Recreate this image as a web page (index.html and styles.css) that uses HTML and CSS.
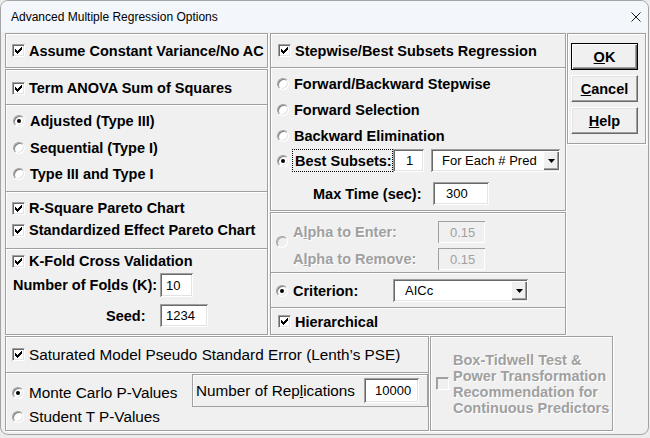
FILE: index.html
```html
<!DOCTYPE html>
<html lang="en">
<head>
    <meta charset="UTF-8">
    <meta name="viewport" content="width=device-width, initial-scale=1.0">
    <title>Advanced Multiple Regression Options</title>
    <link rel="stylesheet" href="styles.css">
</head>
<body>

<div class="window">
    <div class="titlebar">
        <span class="title">Advanced Multiple Regression Options</span>
        <svg class="close" width="10" height="10" viewBox="0 0 10 10"><path d="M0.5 0.5L9.5 9.5M9.5 0.5L0.5 9.5" stroke="#1a1a1a" stroke-width="1"/></svg>
    </div>

    <div class="client">
        <div class="top">
            <!-- Left column -->
            <div class="col-left">
                <div class="frame frame-assume">
                    <label class="opt"><span class="chk"><svg width="7" height="7" viewBox="0 0 7 7"><path d="M0 2h1v3H0zM1 3h1v3H1zM2 4h1v3H2zM3 3h1v3H3zM4 2h1v3H4zM5 1h1v3H5zM6 0h1v3H6z"/></svg></span>Assume Constant Variance/No AC</label>
                </div>

                <div class="frame frame-anova">
                    <div class="sec-anova-head">
                        <label class="opt"><span class="chk"><svg width="7" height="7" viewBox="0 0 7 7"><path d="M0 2h1v3H0zM1 3h1v3H1zM2 4h1v3H2zM3 3h1v3H3zM4 2h1v3H4zM5 1h1v3H5zM6 0h1v3H6z"/></svg></span>Term ANOVA Sum of Squares</label>
                    </div>
                    <div class="sep"></div>
                    <div class="sec-types">
                        <label class="opt"><span class="rad on"></span>Adjusted (Type III)</label>
                        <label class="opt"><span class="rad"></span>Sequential (Type I)</label>
                        <label class="opt"><span class="rad"></span>Type III and Type I</label>
                    </div>
                    <div class="sep"></div>
                    <div class="sec-pareto">
                        <label class="opt"><span class="chk"><svg width="7" height="7" viewBox="0 0 7 7"><path d="M0 2h1v3H0zM1 3h1v3H1zM2 4h1v3H2zM3 3h1v3H3zM4 2h1v3H4zM5 1h1v3H5zM6 0h1v3H6z"/></svg></span>R-Square Pareto Chart</label>
                        <label class="opt"><span class="chk"><svg width="7" height="7" viewBox="0 0 7 7"><path d="M0 2h1v3H0zM1 3h1v3H1zM2 4h1v3H2zM3 3h1v3H3zM4 2h1v3H4zM5 1h1v3H5zM6 0h1v3H6z"/></svg></span>Standardized Effect Pareto Chart</label>
                    </div>
                    <div class="sep"></div>
                    <div class="sec-kfold">
                        <label class="opt kf-row1"><span class="chk"><svg width="7" height="7" viewBox="0 0 7 7"><path d="M0 2h1v3H0zM1 3h1v3H1zM2 4h1v3H2zM3 3h1v3H3zM4 2h1v3H4zM5 1h1v3H5zM6 0h1v3H6z"/></svg></span>K-Fold Cross Validation</label>
                        <div class="kf-row2">
                            <span class="lbl-folds">Number of Fo<u>l</u>ds (K):</span>
                            <input type="text" class="edit w-folds" value="10">
                        </div>
                        <div class="kf-row3">
                            <span class="lbl-seed">Seed:</span>
                            <input type="text" class="edit w-seed" value="1234">
                        </div>
                    </div>
                </div>
            </div>

            <!-- Middle column -->
            <div class="col-mid">
                <div class="frame frame-step">
                    <div class="sec-step-head">
                        <label class="opt"><span class="chk"><svg width="7" height="7" viewBox="0 0 7 7"><path d="M0 2h1v3H0zM1 3h1v3H1zM2 4h1v3H2zM3 3h1v3H3zM4 2h1v3H4zM5 1h1v3H5zM6 0h1v3H6z"/></svg></span>Stepwise/Best Subsets Regression</label>
                    </div>
                    <div class="sep"></div>
                    <div class="sec-methods">
                        <label class="opt"><span class="rad"></span>Forward/Backward Stepwise</label>
                        <label class="opt"><span class="rad"></span>Forward Selection</label>
                        <label class="opt"><span class="rad"></span>Backward Elimination</label>
                        <div class="row-best">
                            <span class="rad on"></span>
                            <span class="focus">Best Subsets:</span>
                            <input type="text" class="edit w-best" value="1">
                            <div class="combo w-each">
                                <span>For Each # Pred</span>
                                <span class="combo-arrow"><svg width="7" height="4" viewBox="0 0 7 4"><path d="M0 0h7L3.5 4z"/></svg></span>
                            </div>
                        </div>
                        <div class="row-max">
                            <span class="lbl-max">Max Time (sec):</span>
                            <input type="text" class="edit w-max" value="300">
                        </div>
                    </div>
                </div>

                <div class="frame frame-alpha">
                    <div class="sec-alpha">
                        <span class="rad off alpha-rad"></span>
                        <div class="alpha-grid">
                            <span class="dis">A<u>l</u>pha to Enter:</span>
                            <input type="text" class="edit edit-off" value="0.15">
                            <span class="dis">A<u>l</u>pha to Remove:</span>
                            <input type="text" class="edit edit-off" value="0.15">
                        </div>
                    </div>
                    <div class="sep"></div>
                    <div class="sec-crit">
                        <span class="rad on"></span>
                        <span class="lbl-crit">Criterion:</span>
                        <div class="combo w-crit">
                            <span>AICc</span>
                            <span class="combo-arrow"><svg width="7" height="4" viewBox="0 0 7 4"><path d="M0 0h7L3.5 4z"/></svg></span>
                        </div>
                    </div>
                    <div class="sep"></div>
                    <div class="sec-hier">
                        <label class="opt"><span class="chk"><svg width="7" height="7" viewBox="0 0 7 7"><path d="M0 2h1v3H0zM1 3h1v3H1zM2 4h1v3H2zM3 3h1v3H3zM4 2h1v3H4zM5 1h1v3H5zM6 0h1v3H6z"/></svg></span>Hierarchical</label>
                    </div>
                </div>
            </div>

            <!-- Buttons -->
            <div class="frame frame-buttons">
                <button class="btn btn-default"><u>O</u>K</button>
                <button class="btn"><u>C</u>ancel</button>
                <button class="btn"><u>H</u>elp</button>
            </div>
        </div>

        <div class="bottom">
            <div class="frame frame-pse">
                <div class="sec-pse-head">
                    <label class="opt"><span class="chk"><svg width="7" height="7" viewBox="0 0 7 7"><path d="M0 2h1v3H0zM1 3h1v3H1zM2 4h1v3H2zM3 3h1v3H3zM4 2h1v3H4zM5 1h1v3H5zM6 0h1v3H6z"/></svg></span>Saturated Model Pseudo Standard Error (Lenth’s PSE)</label>
                </div>
                <div class="sep"></div>
                <div class="sec-pvalues">
                    <div class="pv-radios">
                        <label class="opt"><span class="rad on"></span>Monte Carlo P-Values</label>
                        <label class="opt"><span class="rad"></span>Student T P-Values</label>
                    </div>
                    <div class="frame rep-box">
                        <span class="lbl-rep">Number of Rep<u>l</u>ications</span>
                        <input type="text" class="edit w-rep" value="10000">
                    </div>
                </div>
            </div>

            <div class="frame frame-box">
                <span class="chk chk-off"></span>
                <span class="dis box-text">Box-Tidwell Test &amp;<br>Power Transformation<br>Recommendation for<br>Continuous Predictors</span>
            </div>
        </div>
    </div>
</div>

</body>
</html>
```

FILE: styles.css
```css
body {
    margin: 0;
    background-color: #ececec;
    font-family: 'Liberation Sans', Arial, sans-serif;
}

.window {
    width: 649px;
    height: 435px;
    box-sizing: border-box;
    border: 1px solid #a4a4a4;
    border-radius: 8px;
    background-color: #f0f0f0;
    overflow: hidden;
}

.titlebar {
    height: 31px;
    background-color: #f3f6fb;
    display: flex;
    align-items: center;
    justify-content: space-between;
    padding: 0 7px 0 10px;
}

.title {
    font-size: 12px;
    color: #000;
}

.close {
    display: block;
}

.client {
    padding: 1px 0 0 4px;
    font-size: 14.5px;
    font-weight: bold;
    color: #000;
}

/* etched group frame */
.frame {
    box-sizing: border-box;
    border: 1px solid #a0a0a0;
    box-shadow: inset 1px 1px 0 #fff, 1px 1px 0 #fff;
}

.sep {
    flex: none;
    border-top: 1px solid #a0a0a0;
    border-bottom: 1px solid #fff;
}

.opt {
    display: flex;
    align-items: center;
    white-space: nowrap;
}

/* check box */
.chk {
    flex: none;
    width: 13px;
    height: 13px;
    box-sizing: border-box;
    border: 1px solid;
    border-color: #a0a0a0 #fff #fff #a0a0a0;
    box-shadow: inset 1px 1px 0 #696969, inset -1px -1px 0 #e3e3e3;
    background-color: #fff;
    margin-right: 4px;
    display: flex;
    align-items: center;
    justify-content: center;
}

.chk svg {
    display: block;
}

.chk-off {
    background-color: #f0f0f0;
    box-shadow: inset 1px 1px 0 #a0a0a0;
}

/* radio button */
.rad {
    flex: none;
    width: 12px;
    height: 12px;
    box-sizing: border-box;
    border-radius: 50%;
    border: 1px solid;
    border-color: #a0a0a0 #fff #fff #a0a0a0;
    box-shadow: inset 1px 1px 0 #808080, inset -1px -1px 0 #e3e3e3;
    background-color: #fff;
    margin-right: 5px;
    display: flex;
    align-items: center;
    justify-content: center;
}

.rad.on::after {
    content: '';
    width: 4px;
    height: 4px;
    border-radius: 50%;
    background-color: #000;
}

.rad.off {
    background-color: #f0f0f0;
    box-shadow: inset 1px 1px 0 #b4b4b4;
}

/* edit box */
.edit {
    box-sizing: border-box;
    height: 23px;
    margin: 0;
    padding: 0 0 0 6px;
    border: none;
    outline: none;
    background-color: #fff;
    box-shadow: inset 1px 1px 0 #a0a0a0, inset -1px -1px 0 #fff, inset 2px 2px 0 #696969, inset -2px -2px 0 #e3e3e3;
    font: 13px 'Liberation Sans', Arial, sans-serif;
    color: #000;
}

.edit-off {
    background-color: #f0f0f0;
    color: #a0a0a0;
    padding-left: 12px;
    box-shadow: inset 1px 1px 0 #a0a0a0, inset -1px -1px 0 #fff;
}

.w-folds { width: 33px; height: 24px; }
.w-seed { width: 48px; }
.w-best { width: 31px; padding-left: 13px; }
.w-max { width: 56px; padding-left: 13px; }
.w-rep { width: 55px; height: 25px; padding-left: 11px; }
.edit-off { width: 47px; height: 22px; }

/* drop down */
.combo {
    box-sizing: border-box;
    height: 23px;
    display: flex;
    align-items: center;
    justify-content: space-between;
    padding: 2px 1px 2px 11px;
    background-color: #fff;
    box-shadow: inset 1px 1px 0 #a0a0a0, inset -1px -1px 0 #fff, inset 2px 2px 0 #696969, inset -2px -2px 0 #e3e3e3;
    font-size: 13px;
    font-weight: normal;
}

.combo-arrow {
    width: 16px;
    height: 19px;
    box-sizing: border-box;
    background-color: #f0f0f0;
    box-shadow: inset 1px 1px 0 #fff, inset -1px -1px 0 #696969, inset -2px -2px 0 #a0a0a0;
    display: flex;
    align-items: center;
    justify-content: center;
}

.combo-arrow svg {
    display: block;
}

.w-each { width: 129px; margin-left: 7px; }
.w-crit { width: 135px; padding-left: 12px; }

.dis {
    color: #a0a0a0;
    text-shadow: 1px 1px 0 #fff;
}

/* layout */
.top {
    display: flex;
    height: 303px;
}

.col-left {
    width: 263px;
    margin-right: 2px;
    display: flex;
    flex-direction: column;
}

.col-mid {
    width: 296px;
    margin-right: 1px;
    display: flex;
    flex-direction: column;
}

.frame-assume {
    height: 35px;
    margin-bottom: 1px;
    display: flex;
    align-items: center;
    padding-left: 6px;
}

.frame-anova {
    height: 266px;
    display: flex;
    flex-direction: column;
}

.sec-anova-head {
    height: 34px;
    box-sizing: border-box;
    padding: 2px 0 0 6px;
    display: flex;
    align-items: center;
}

.sec-types {
    height: 85px;
    box-sizing: border-box;
    padding: 2px 0 0 7px;
}

.sec-types .opt {
    height: 26.5px;
}

.sec-pareto {
    height: 55px;
    box-sizing: border-box;
    padding: 4px 0 0 6px;
}

.sec-pareto .opt {
    height: 22px;
}

.sec-kfold {
    height: 84px;
    box-sizing: border-box;
    padding-left: 6px;
}

.kf-row1 {
    height: 22px;
}

.kf-row2 {
    margin-top: 1px;
    height: 24px;
    padding-left: 1px;
    display: flex;
    align-items: center;
}

.lbl-folds {
    width: 147px;
}

.kf-row3 {
    margin-top: 7px;
    height: 23px;
    padding-left: 94px;
    display: flex;
    align-items: center;
}

.lbl-seed {
    width: 54px;
}

.frame-step {
    height: 178px;
    margin-bottom: 1px;
    display: flex;
    flex-direction: column;
}

.sec-step-head {
    height: 33px;
    padding-left: 7px;
    display: flex;
    align-items: center;
}

.sec-methods {
    flex: 1;
    padding: 2px 0 0 6px;
}

.sec-methods .opt {
    height: 26px;
}

.row-best {
    height: 23px;
    display: flex;
    align-items: center;
}

.row-best .rad {
    margin-right: 3px;
}

.focus {
    box-sizing: border-box;
    width: 101px;
    height: 23px;
    padding-left: 2px;
    border: 1px dotted #000;
    display: flex;
    align-items: center;
    white-space: nowrap;
}

.row-max {
    margin-top: 10px;
    height: 23px;
    padding-left: 36px;
    display: flex;
    align-items: center;
}

.lbl-max {
    width: 120px;
    white-space: nowrap;
}

.frame-alpha {
    height: 123px;
    display: flex;
    flex-direction: column;
}

.sec-alpha {
    height: 59px;
    box-sizing: border-box;
    padding: 8px 0 0 5px;
    display: flex;
}

.alpha-rad {
    margin-top: 15px;
}

.alpha-grid {
    display: grid;
    grid-template-columns: 145px 47px;
    grid-auto-rows: 22px;
    row-gap: 5px;
    align-items: center;
    white-space: nowrap;
}

.sec-crit {
    height: 33px;
    padding-left: 5px;
    display: flex;
    align-items: center;
}

.lbl-crit {
    width: 100px;
}

.sec-hier {
    flex: 1;
    padding-left: 7px;
    display: flex;
    align-items: center;
}

.frame-buttons {
    width: 79px;
    height: 111px;
    padding: 9px 0 0 3px;
    display: flex;
    flex-direction: column;
    gap: 5px;
}

.btn {
    width: 67px;
    height: 27px;
    box-sizing: border-box;
    padding: 0;
    margin: 0;
    border: 1px solid;
    border-color: #fff #696969 #696969 #fff;
    box-shadow: inset -1px -1px 0 #a0a0a0, inset 1px 1px 0 #e3e3e3;
    background-color: #f0f0f0;
    font: bold 14.5px 'Liberation Sans', Arial, sans-serif;
    color: #000;
}

.btn-default {
    border-color: #000;
    box-shadow: inset 1px 1px 0 #fff, inset -1px -1px 0 #696969, inset -2px -2px 0 #a0a0a0;
}

.bottom {
    display: flex;
}

.frame-pse {
    width: 424px;
    height: 95px;
    display: flex;
    flex-direction: column;
    font-weight: normal;
    font-size: 15.3px;
}

.sec-pse-head {
    height: 35px;
    padding-left: 6px;
    display: flex;
    align-items: center;
}

.sec-pvalues {
    flex: 1;
    display: flex;
}

.pv-radios {
    width: 186px;
    box-sizing: border-box;
    padding: 7px 0 0 6px;
}

.pv-radios .opt {
    height: 24px;
}

.rep-box {
    width: 236px;
    height: 33px;
    padding-left: 3px;
    display: flex;
    align-items: center;
    box-shadow: inset 1px 1px 0 #fff;
}

.lbl-rep {
    width: 168px;
    white-space: nowrap;
}

.frame-box {
    width: 183px;
    height: 95px;
    margin-left: 1px;
    padding-left: 5px;
    display: flex;
    align-items: center;
}

.box-text {
    line-height: 16px;
    white-space: nowrap;
}
```
